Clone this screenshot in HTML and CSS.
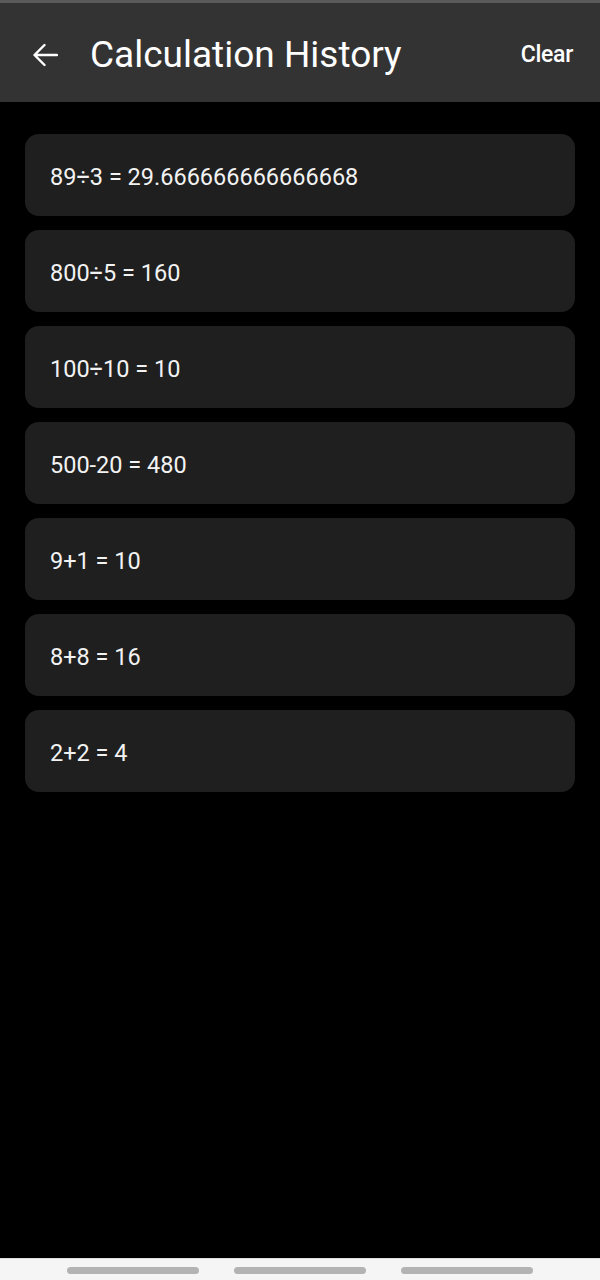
FILE: index.html
```html
<!DOCTYPE html>
<html>
<head>
<meta charset="utf-8">
<link rel="stylesheet" href="styles.css">
</head>
<body>
<div class="screen">
  <div class="status"></div>
  <header class="appbar">
    <svg class="back" width="26" height="24" viewBox="0 0 26 24"><path d="M25 12H3M12.5 2 2.5 12l10 10" fill="none" stroke="#fff" stroke-width="2.4" stroke-linecap="round" stroke-linejoin="round"/></svg>
    <h1 class="title">Calculation History</h1>
    <span class="clear">Clear</span>
  </header>
  <main class="list">
    <div class="card">89÷3 = 29.666666666666668</div>
    <div class="card">800÷5 = 160</div>
    <div class="card">100÷10 = 10</div>
    <div class="card">500-20 = 480</div>
    <div class="card">9+1 = 10</div>
    <div class="card">8+8 = 16</div>
    <div class="card">2+2 = 4</div>
  </main>
  <nav class="navbar">
    <span class="pill"></span>
    <span class="pill"></span>
    <span class="pill"></span>
  </nav>
</div>
</body>
</html>
```

FILE: styles.css
```css
* { box-sizing: border-box; }
html, body { margin: 0; padding: 0; background: #000; }
body { font-family: Roboto, "Noto Sans", sans-serif; color: #fff; }
.screen { width: 600px; height: 1280px; display: flex; flex-direction: column; background: #000; }
.status { height: 3px; background: #5a5a5a; flex: none; }
.appbar { height: 99px; flex: none; background: #333333; display: flex; align-items: center; padding: 4px 27px 0 32px; }
.back { flex: none; width: 26px; height: 24px; }
.title { margin: 0 0 0 32px; font-size: 37px; font-weight: 400; flex: 1; letter-spacing: 0; }
.clear { font-size: 23px; font-weight: 500; letter-spacing: -0.3px; }
.list { flex: 1; display: flex; flex-direction: column; gap: 14px; padding: 32px 25px 0; }
.card { height: 82px; background: #1f1f1f; border-radius: 14px; display: flex; align-items: center; padding: 4px 0 0 25px; font-size: 23.5px; color: #f2f2f2; }
.navbar { height: 22px; flex: none; background: #f5f5f5; border-top: 1px solid #ddd; display: flex; justify-content: center; align-items: center; gap: 35px; padding-top: 2px; }
.pill { width: 132px; height: 7px; border-radius: 4px; background: #b3b3b3; }
```
